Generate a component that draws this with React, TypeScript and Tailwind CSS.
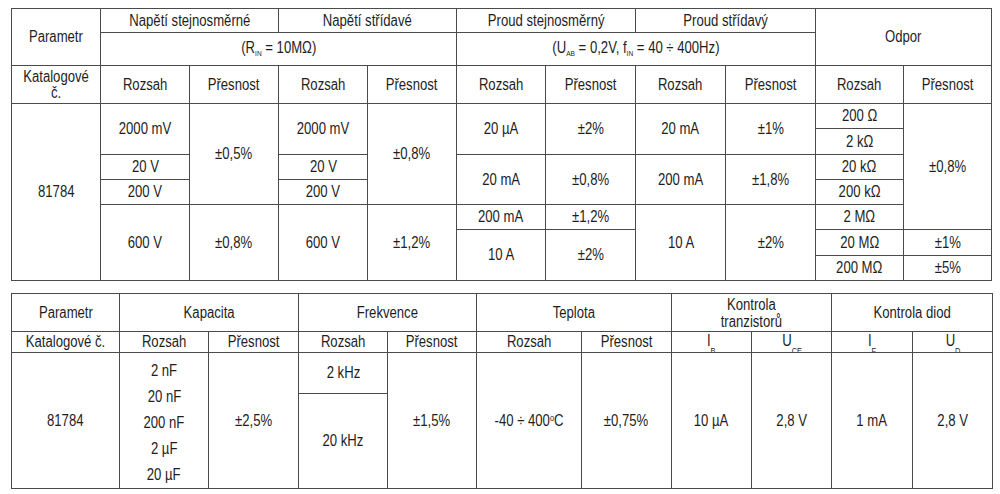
import type { ReactNode } from 'react';

// condensed Arial look: 16px Liberation Sans squeezed horizontally
const T = ({ children }: { children: ReactNode }) => (
  <span className="inline-block whitespace-nowrap scale-x-[0.82]">{children}</span>
);

const Sub = ({ children }: { children: ReactNode }) => (
  <span className="relative top-[3px] text-[8px]">{children}</span>
);

const cell = 'border border-[#4a4a4a] p-0 text-center align-middle';

// subscripts in this header row are half hidden under the row line
const ClippedHead = ({ main, sub }: { main: string; sub: string }) => (
  <div className="flex h-[19px] items-center justify-center overflow-hidden leading-[16px]">
    <T>
      {main}
      <span className="relative top-[8px] text-[9px]">{sub}</span>
    </T>
  </div>
);

function TopTable() {
  const cols = [89, 89, 89, 89, 89, 89, 90, 90, 90, 88, 88];
  return (
    <table className="table-fixed border-collapse leading-[18px]" style={{ width: 980 }}>
      <colgroup>
        {cols.map((w, i) => (
          <col key={i} style={{ width: w }} />
        ))}
      </colgroup>
      <tbody>
        <tr className="h-[24px]">
          <td rowSpan={2} className={cell}>
            <T>Parametr</T>
          </td>
          <td colSpan={2} className={cell}>
            <T>Napětí stejnosměrné</T>
          </td>
          <td colSpan={2} className={cell}>
            <T>Napětí střídavé</T>
          </td>
          <td colSpan={2} className={cell}>
            <T>Proud stejnosměrný</T>
          </td>
          <td colSpan={2} className={cell}>
            <T>Proud střídavý</T>
          </td>
          <td rowSpan={2} colSpan={2} className={cell}>
            <T>Odpor</T>
          </td>
        </tr>
        <tr className="h-[33px]">
          <td colSpan={4} className={cell}>
            <T>
              (R<Sub>IN</Sub> = 10MΩ)
            </T>
          </td>
          <td colSpan={4} className={cell}>
            <T>
              (U<Sub>AB</Sub> = 0,2V, f<Sub>IN</Sub> = 40 ÷ 400Hz)
            </T>
          </td>
        </tr>
        <tr className="h-[38px]">
          <td className={`${cell} leading-[16px]`}>
            <T>
              Katalogové
              <br />
              č.
            </T>
          </td>
          {[0, 1, 2, 3, 4].map((i) => [
            <td key={`r${i}`} className={cell}>
              <T>Rozsah</T>
            </td>,
            <td key={`p${i}`} className={cell}>
              <T>Přesnost</T>
            </td>,
          ])}
        </tr>

        <tr className="h-[25px]">
          <td rowSpan={7} className={cell}>
            <T>81784</T>
          </td>
          <td rowSpan={2} className={cell}>
            <T>2000 mV</T>
          </td>
          <td rowSpan={4} className={cell}>
            <T>±0,5%</T>
          </td>
          <td rowSpan={2} className={cell}>
            <T>2000 mV</T>
          </td>
          <td rowSpan={4} className={cell}>
            <T>±0,8%</T>
          </td>
          <td rowSpan={2} className={cell}>
            <T>20 µA</T>
          </td>
          <td rowSpan={2} className={cell}>
            <T>±2%</T>
          </td>
          <td rowSpan={2} className={cell}>
            <T>20 mA</T>
          </td>
          <td rowSpan={2} className={cell}>
            <T>±1%</T>
          </td>
          <td className={cell}>
            <T>200 Ω</T>
          </td>
          <td rowSpan={5} className={cell}>
            <T>±0,8%</T>
          </td>
        </tr>
        <tr className="h-[26px]">
          <td className={cell}>
            <T>2 kΩ</T>
          </td>
        </tr>
        <tr className="h-[25px]">
          <td className={cell}>
            <T>20 V</T>
          </td>
          <td className={cell}>
            <T>20 V</T>
          </td>
          <td rowSpan={2} className={cell}>
            <T>20 mA</T>
          </td>
          <td rowSpan={2} className={cell}>
            <T>±0,8%</T>
          </td>
          <td rowSpan={2} className={cell}>
            <T>200 mA</T>
          </td>
          <td rowSpan={2} className={cell}>
            <T>±1,8%</T>
          </td>
          <td className={cell}>
            <T>20 kΩ</T>
          </td>
        </tr>
        <tr className="h-[25px]">
          <td className={cell}>
            <T>200 V</T>
          </td>
          <td className={cell}>
            <T>200 V</T>
          </td>
          <td className={cell}>
            <T>200 kΩ</T>
          </td>
        </tr>
        <tr className="h-[25px]">
          <td rowSpan={3} className={cell}>
            <T>600 V</T>
          </td>
          <td rowSpan={3} className={cell}>
            <T>±0,8%</T>
          </td>
          <td rowSpan={3} className={cell}>
            <T>600 V</T>
          </td>
          <td rowSpan={3} className={cell}>
            <T>±1,2%</T>
          </td>
          <td className={cell}>
            <T>200 mA</T>
          </td>
          <td className={cell}>
            <T>±1,2%</T>
          </td>
          <td rowSpan={3} className={cell}>
            <T>10 A</T>
          </td>
          <td rowSpan={3} className={cell}>
            <T>±2%</T>
          </td>
          <td className={cell}>
            <T>2 MΩ</T>
          </td>
        </tr>
        <tr className="h-[26px]">
          <td rowSpan={2} className={cell}>
            <T>10 A</T>
          </td>
          <td rowSpan={2} className={cell}>
            <T>±2%</T>
          </td>
          <td className={cell}>
            <T>20 MΩ</T>
          </td>
          <td className={cell}>
            <T>±1%</T>
          </td>
        </tr>
        <tr className="h-[25px]">
          <td className={cell}>
            <T>200 MΩ</T>
          </td>
          <td className={cell}>
            <T>±5%</T>
          </td>
        </tr>
      </tbody>
    </table>
  );
}

function BottomTable() {
  const cols = [108, 89, 90, 89, 89, 105, 90, 80, 80, 81, 80];
  const caps = ['2 nF', '20 nF', '200 nF', '2 µF', '20 µF'];
  const head2 = `${cell} leading-[16px]`;
  return (
    <table className="table-fixed border-collapse leading-[18px]" style={{ width: 981 }}>
      <colgroup>
        {cols.map((w, i) => (
          <col key={i} style={{ width: w }} />
        ))}
      </colgroup>
      <tbody>
        <tr className="h-[38px]">
          <td className={cell}>
            <T>Parametr</T>
          </td>
          <td colSpan={2} className={cell}>
            <T>Kapacita</T>
          </td>
          <td colSpan={2} className={cell}>
            <T>Frekvence</T>
          </td>
          <td colSpan={2} className={cell}>
            <T>Teplota</T>
          </td>
          <td colSpan={2} className={`${cell} leading-[17px]`}>
            <T>
              Kontrola
              <br />
              tranzistorů
            </T>
          </td>
          <td colSpan={2} className={cell}>
            <T>Kontrola diod</T>
          </td>
        </tr>
        <tr className="h-[21px]">
          <td className={head2}>
            <T>Katalogové č.</T>
          </td>
          <td className={head2}>
            <T>Rozsah</T>
          </td>
          <td className={head2}>
            <T>Přesnost</T>
          </td>
          <td className={head2}>
            <T>Rozsah</T>
          </td>
          <td className={head2}>
            <T>Přesnost</T>
          </td>
          <td className={head2}>
            <T>Rozsah</T>
          </td>
          <td className={head2}>
            <T>Přesnost</T>
          </td>
          <td className={head2}>
            <ClippedHead main="I" sub="B" />
          </td>
          <td className={head2}>
            <ClippedHead main="U" sub="CE" />
          </td>
          <td className={head2}>
            <ClippedHead main="I" sub="F" />
          </td>
          <td className={head2}>
            <ClippedHead main="U" sub="D" />
          </td>
        </tr>
        <tr className="h-[41px]">
          <td rowSpan={2} className={cell}>
            <T>81784</T>
          </td>
          <td rowSpan={2} className={cell}>
            <div className="flex flex-col items-center pt-[4px] leading-[26px]">
              {caps.map((c) => (
                <T key={c}>{c}</T>
              ))}
            </div>
          </td>
          <td rowSpan={2} className={cell}>
            <T>±2,5%</T>
          </td>
          <td className={cell}>
            <T>2 kHz</T>
          </td>
          <td rowSpan={2} className={cell}>
            <T>±1,5%</T>
          </td>
          <td rowSpan={2} className={cell}>
            <T>
              -40 ÷ 400<sup className="text-[9px]">o</sup>C
            </T>
          </td>
          <td rowSpan={2} className={cell}>
            <T>±0,75%</T>
          </td>
          <td rowSpan={2} className={cell}>
            <T>10 µA</T>
          </td>
          <td rowSpan={2} className={cell}>
            <T>2,8 V</T>
          </td>
          <td rowSpan={2} className={cell}>
            <T>1 mA</T>
          </td>
          <td rowSpan={2} className={cell}>
            <T>2,8 V</T>
          </td>
        </tr>
        <tr className="h-[95px]">
          <td className={cell}>
            <T>20 kHz</T>
          </td>
        </tr>
      </tbody>
    </table>
  );
}

export default function App() {
  return (
    <div className="min-h-screen bg-white pl-[11px] pt-[8px] font-['Liberation_Sans',Arial,sans-serif] text-[16px] text-[#1e1e1e]">
      <TopTable />
      <div className="mt-[12px]">
        <BottomTable />
      </div>
    </div>
  );
}
